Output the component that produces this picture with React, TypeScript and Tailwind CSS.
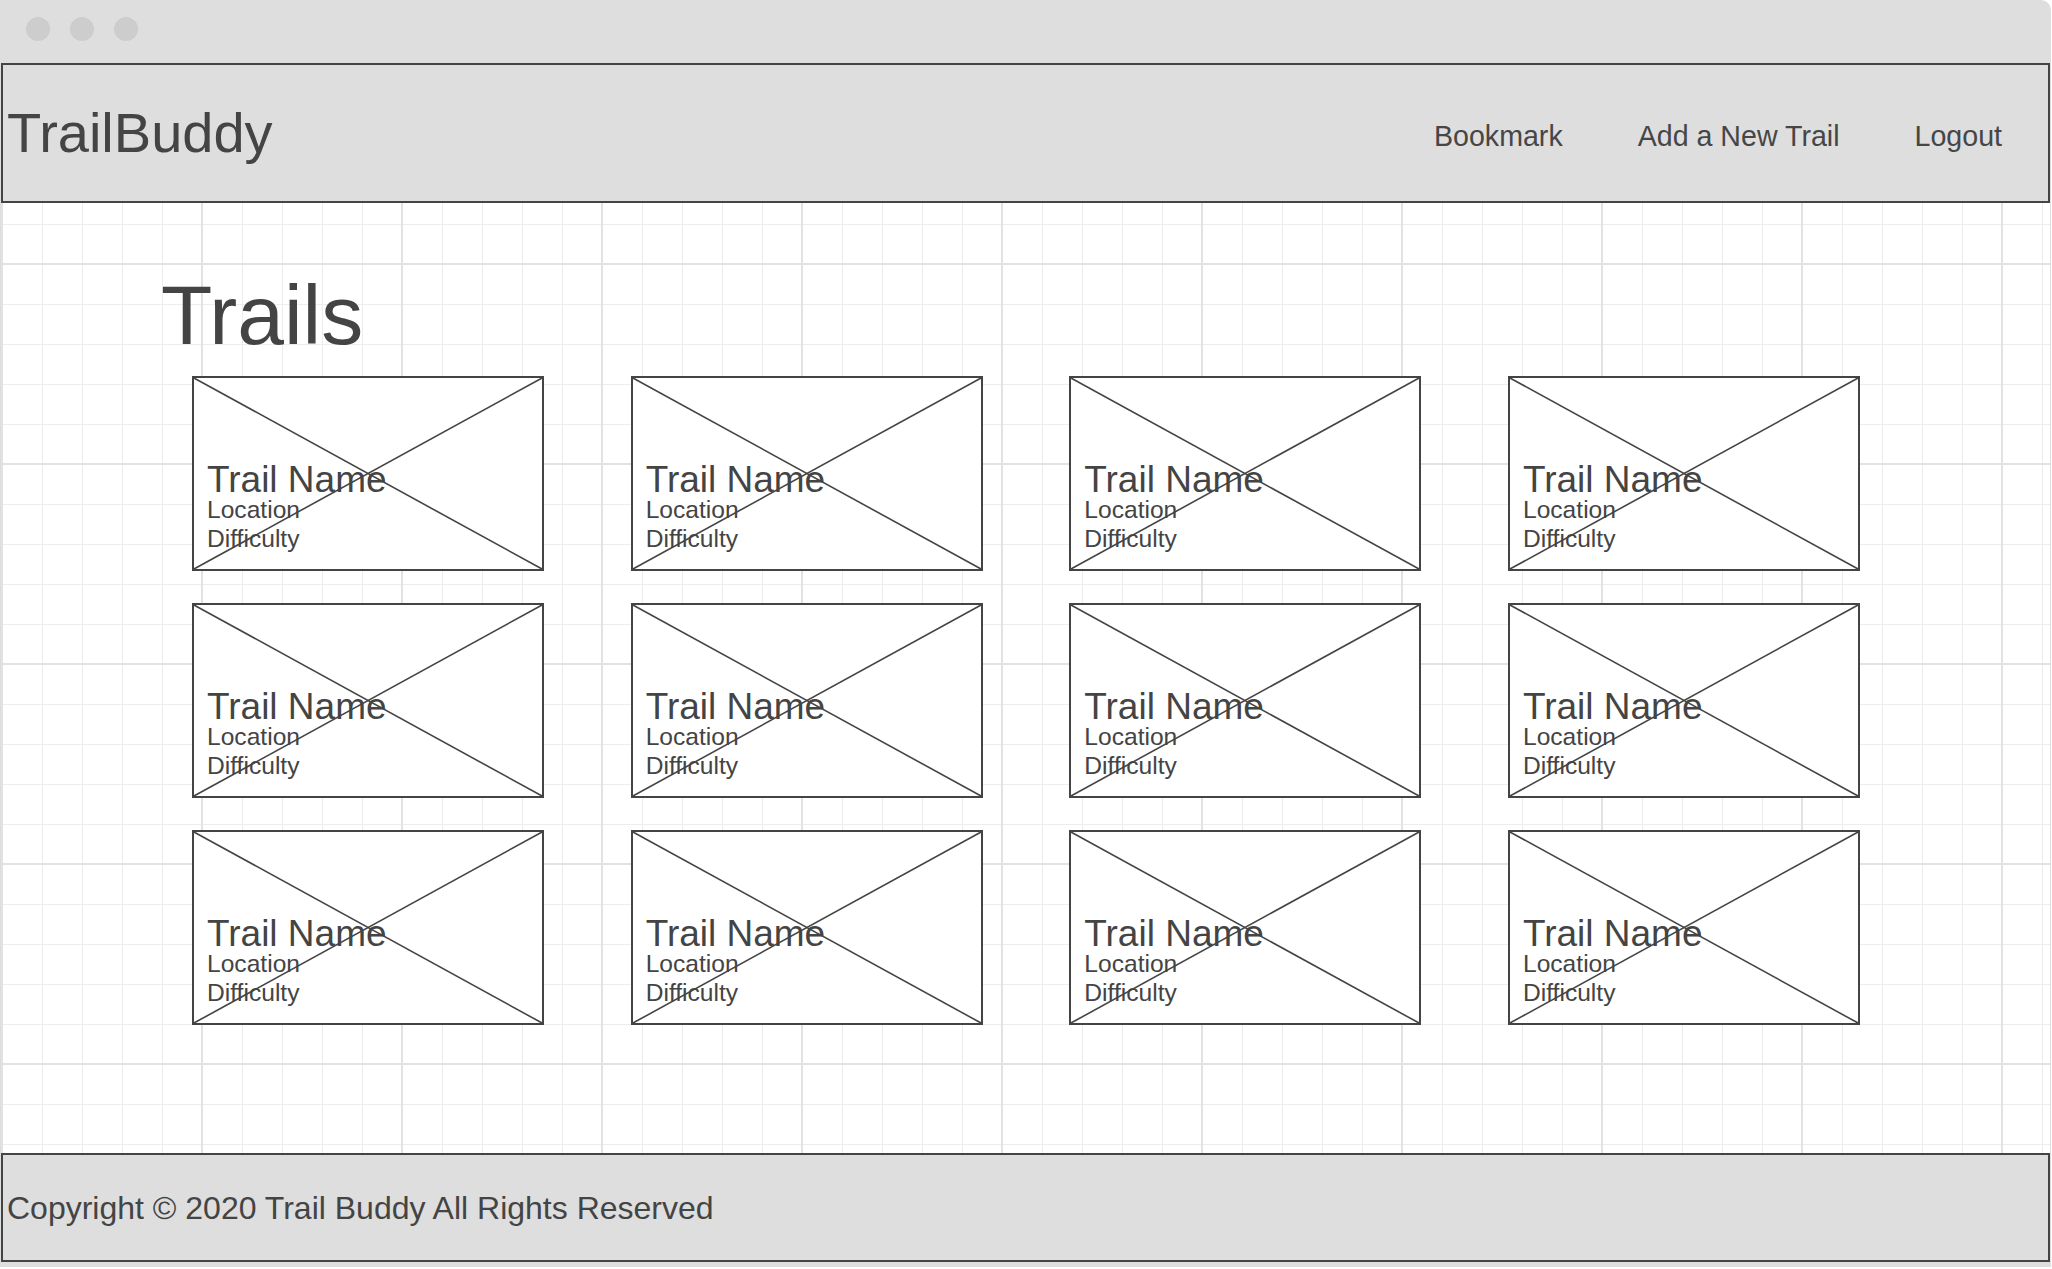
import React from "react"

const trails = Array.from({ length: 12 }, (_, i) => ({
  id: i,
  name: "Trail Name",
  location: "Location",
  difficulty: "Difficulty",
}))

const navLinks = ["Bookmark", "Add a New Trail", "Logout"]

function TrailCard({ name, location, difficulty }: { name: string; location: string; difficulty: string }) {
  return (
    <div className="relative h-[195px] w-[352px] border-2 border-[#444444] bg-white">
      {/* placeholder image cross */}
      <svg className="absolute inset-0 h-full w-full" viewBox="0 0 348 191" preserveAspectRatio="none">
        <line x1="0" y1="0" x2="348" y2="191" stroke="#444444" strokeWidth="1.6" />
        <line x1="0" y1="191" x2="348" y2="0" stroke="#444444" strokeWidth="1.6" />
      </svg>
      <div className="relative flex h-full flex-col justify-end pb-[16px] pl-[13px] text-[#444444]">
        <h3 className="text-[37px] leading-[33px]">{name}</h3>
        <p className="text-[24.6px] leading-[28.5px]">{location}</p>
        <p className="text-[24.6px] leading-[28.5px]">{difficulty}</p>
      </div>
    </div>
  )
}

export default function App() {
  return (
    <div className="h-[1269px] w-[2052px] overflow-hidden bg-white font-['Liberation_Sans',Arial,sans-serif] text-[#444444]">
      <div className="flex h-[1267px] w-[2051px] flex-col rounded-tr-[10px] bg-[#dedede] px-[1px] pb-[5px]">
        {/* Window chrome */}
        <div className="flex h-[63px] shrink-0 items-center gap-[20px] pb-[5px] pl-[25px]">
          <span className="h-[24px] w-[24px] rounded-full bg-[#cdcdcd]" />
          <span className="h-[24px] w-[24px] rounded-full bg-[#cdcdcd]" />
          <span className="h-[24px] w-[24px] rounded-full bg-[#cdcdcd]" />
        </div>

        {/* Header */}
        <header className="flex h-[140px] shrink-0 items-center justify-between border-2 border-[#444444] bg-[#dedede] pl-[4px] pr-[46px]">
          <h1 className="text-[56px]">TrailBuddy</h1>
          <nav className="flex items-center gap-[75px] pt-[7px] text-[28.6px] text-[#464646]">
            {navLinks.map((link) => (
              <a key={link} href="#">
                {link}
              </a>
            ))}
          </nav>
        </header>

        {/* Main */}
        <main className="flex-1 bg-white bg-[linear-gradient(to_right,#e2e2e2_2px,transparent_2px),linear-gradient(to_bottom,#e2e2e2_2px,transparent_2px),linear-gradient(to_right,#ededed_1px,transparent_1px),linear-gradient(to_bottom,#ededed_1px,transparent_1px)] pt-[71px] [background-position:0px_60px,0px_60px,1px_21px,1px_21px] [background-size:200px_200px,200px_200px,40px_40px,40px_40px]">
          <h2 className="ml-[160px] text-[84px] leading-[82px]">Trails</h2>
          <div className="ml-[191px] mt-[20px] grid w-[1668px] grid-cols-[repeat(4,352px)] justify-between gap-y-[32px]">
            {trails.map((t) => (
              <TrailCard key={t.id} name={t.name} location={t.location} difficulty={t.difficulty} />
            ))}
          </div>
        </main>

        {/* Footer */}
        <footer className="flex h-[109px] shrink-0 items-center border-2 border-[#444444] bg-[#dedede] pl-[4px]">
          <p className="text-[32px]">Copyright © 2020 Trail Buddy All Rights Reserved</p>
        </footer>
      </div>
    </div>
  )
}
